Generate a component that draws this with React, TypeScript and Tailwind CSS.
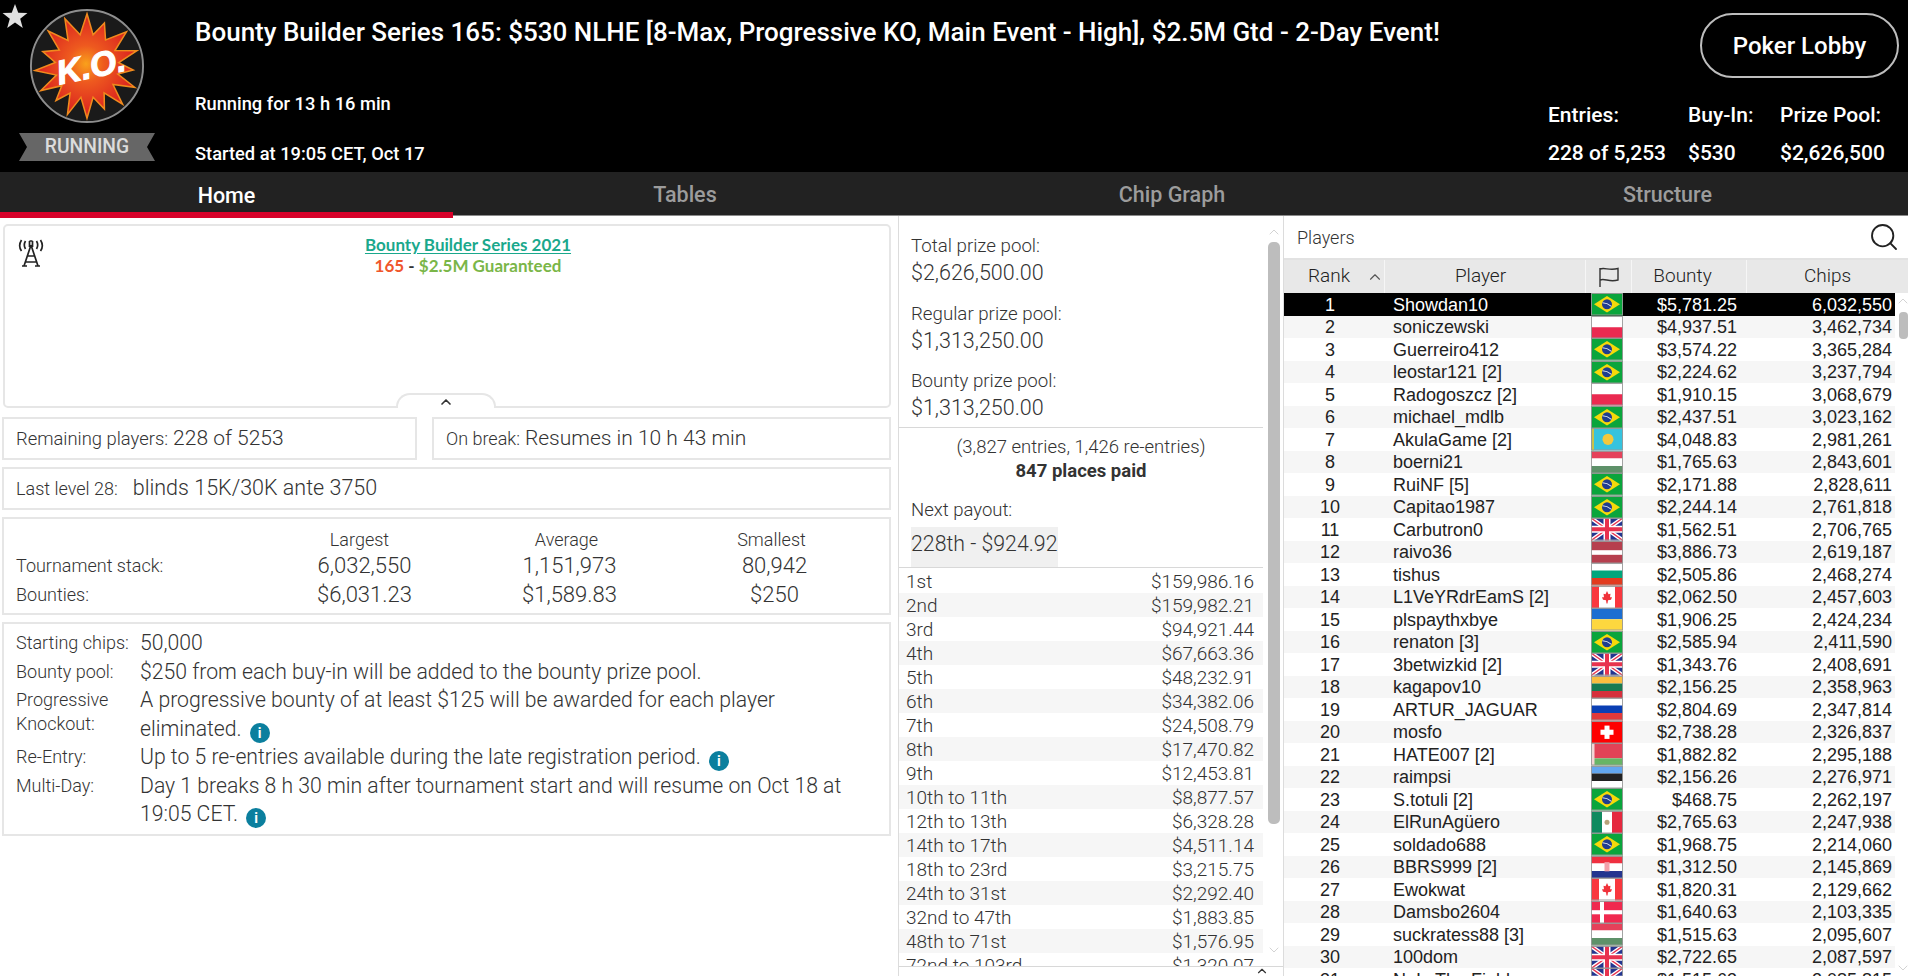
import React from 'react';
import { Search, ChevronUp, ChevronDown } from 'lucide-react';

type FlagCode = 'BR' | 'PL' | 'KZ' | 'HU' | 'GB' | 'LV' | 'BG' | 'CA' | 'UA' | 'LT' | 'RU' | 'CH' | 'BY' | 'EE' | 'MX' | 'HR' | 'DK';

const players: [string, string, FlagCode, string, string][] = [
  ['1', 'Showdan10', 'BR', '$5,781.25', '6,032,550'],
  ['2', 'soniczewski', 'PL', '$4,937.51', '3,462,734'],
  ['3', 'Guerreiro412', 'BR', '$3,574.22', '3,365,284'],
  ['4', 'leostar121 [2]', 'BR', '$2,224.62', '3,237,794'],
  ['5', 'Radogoszcz [2]', 'PL', '$1,910.15', '3,068,679'],
  ['6', 'michael_mdlb', 'BR', '$2,437.51', '3,023,162'],
  ['7', 'AkulaGame [2]', 'KZ', '$4,048.83', '2,981,261'],
  ['8', 'boerni21', 'HU', '$1,765.63', '2,843,601'],
  ['9', 'RuiNF [5]', 'BR', '$2,171.88', '2,828,611'],
  ['10', 'Capitao1987', 'BR', '$2,244.14', '2,761,818'],
  ['11', 'Carbutron0', 'GB', '$1,562.51', '2,706,765'],
  ['12', 'raivo36', 'LV', '$3,886.73', '2,619,187'],
  ['13', 'tishus', 'BG', '$2,505.86', '2,468,274'],
  ['14', 'L1VeYRdrEamS [2]', 'CA', '$2,062.50', '2,457,603'],
  ['15', 'plspaythxbye', 'UA', '$1,906.25', '2,424,234'],
  ['16', 'renaton [3]', 'BR', '$2,585.94', '2,411,590'],
  ['17', '3betwizkid [2]', 'GB', '$1,343.76', '2,408,691'],
  ['18', 'kagapov10', 'LT', '$2,156.25', '2,358,963'],
  ['19', 'ARTUR_JAGUAR', 'RU', '$2,804.69', '2,347,814'],
  ['20', 'mosfo', 'CH', '$2,738.28', '2,326,837'],
  ['21', 'HATE007 [2]', 'BY', '$1,882.82', '2,295,188'],
  ['22', 'raimpsi', 'EE', '$2,156.26', '2,276,971'],
  ['23', 'S.totuli [2]', 'BR', '$468.75', '2,262,197'],
  ['24', 'ElRunAgüero', 'MX', '$2,765.63', '2,247,938'],
  ['25', 'soldado688', 'BR', '$1,968.75', '2,214,060'],
  ['26', 'BBRS999 [2]', 'HR', '$1,312.50', '2,145,869'],
  ['27', 'Ewokwat', 'CA', '$1,820.31', '2,129,662'],
  ['28', 'Damsbo2604', 'DK', '$1,640.63', '2,103,335'],
  ['29', 'suckratess88 [3]', 'HU', '$1,515.63', '2,095,607'],
  ['30', '100dom', 'GB', '$2,722.65', '2,087,597'],
  ['31', 'NoIs.The.Field', 'GB', '$1,515.63', '2,085,815'],
];

const payouts: [string, string][] = [
  ['1st', '$159,986.16'],
  ['2nd', '$159,982.21'],
  ['3rd', '$94,921.44'],
  ['4th', '$67,663.36'],
  ['5th', '$48,232.91'],
  ['6th', '$34,382.06'],
  ['7th', '$24,508.79'],
  ['8th', '$17,470.82'],
  ['9th', '$12,453.81'],
  ['10th to 11th', '$8,877.57'],
  ['12th to 13th', '$6,328.28'],
  ['14th to 17th', '$4,511.14'],
  ['18th to 23rd', '$3,215.75'],
  ['24th to 31st', '$2,292.40'],
  ['32nd to 47th', '$1,883.85'],
  ['48th to 71st', '$1,576.95'],
  ['72nd to 103rd', '$1,320.07'],
];

const stripes = (colors: string[]) => {
  const h = 22 / colors.length;
  return colors.map((c, i) => <rect key={i} x="0" y={i * h} width="32" height={h} fill={c} />);
};

const flagArt: Record<FlagCode, React.ReactNode> = {
  BR: (
    <>
      <rect width="32" height="22" fill="#0aa53c" />
      <polygon points="16,3 29,11 16,19 3,11" fill="#f5d90a" />
      <circle cx="16" cy="11" r="5" fill="#1f3d8f" />
      <path d="M11.5 9.5 Q16 9.5 20.5 13" stroke="#dfe6f0" strokeWidth="1" fill="none" />
    </>
  ),
  PL: stripes(['#ffffff', '#ea2a50']),
  KZ: (
    <>
      <rect width="32" height="22" fill="#36c3de" />
      <rect x="1" width="2" height="22" fill="#c9c24a" />
      <circle cx="17" cy="11" r="5.5" fill="#f4c83c" />
    </>
  ),
  HU: stripes(['#e5415a', '#ffffff', '#5e9169']),
  GB: (
    <>
      <rect width="32" height="22" fill="#23358f" />
      <path d="M0 0L32 22M32 0L0 22" stroke="#ffffff" strokeWidth="4" />
      <path d="M0 0L32 22M32 0L0 22" stroke="#e8324e" strokeWidth="1.4" />
      <path d="M16 0V22M0 11H32" stroke="#ffffff" strokeWidth="7" />
      <path d="M16 0V22M0 11H32" stroke="#e8324e" strokeWidth="4" />
    </>
  ),
  LV: (
    <>
      <rect width="32" height="22" fill="#b63f4e" />
      <rect y="9" width="32" height="4.5" fill="#ffffff" />
    </>
  ),
  BG: stripes(['#ffffff', '#00a67c', '#e23b1f']),
  CA: (
    <>
      <rect width="32" height="22" fill="#ffffff" />
      <rect width="8" height="22" fill="#f9373e" />
      <rect x="24" width="8" height="22" fill="#f9373e" />
      <polygon points="16,5 17.5,8 19.5,7.5 19,11 21,11 20,13.5 17,14 16.5,17 15.5,17 15,14 12,13.5 11,11 13,11 12.5,7.5 14.5,8" fill="#f0323a" />
    </>
  ),
  UA: stripes(['#1c6ed1', '#fdd73f']),
  LT: stripes(['#fbbd3f', '#167a52', '#d6303c']),
  RU: stripes(['#ffffff', '#0a3fb4', '#e0393a']),
  CH: (
    <>
      <rect width="32" height="22" fill="#ff0000" />
      <rect x="13.5" y="4.5" width="5" height="13" fill="#ffffff" />
      <rect x="9.5" y="8.5" width="13" height="5" fill="#ffffff" />
    </>
  ),
  BY: (
    <>
      <rect width="32" height="15" fill="#e24256" />
      <rect y="15" width="32" height="7" fill="#67b565" />
      <rect width="3.5" height="22" fill="#f3d6d6" />
    </>
  ),
  EE: stripes(['#63a7ef', '#222222', '#ffffff']),
  MX: (
    <>
      <rect width="11" height="22" fill="#0f8a5f" />
      <rect x="11" width="10" height="22" fill="#ffffff" />
      <rect x="21" width="11" height="22" fill="#e5283f" />
      <circle cx="16" cy="11" r="2.5" fill="#b7a27a" />
    </>
  ),
  HR: (
    <>
      {stripes(['#ef3040', '#ffffff', '#23348f'])}
      <rect x="13.5" y="6" width="5" height="9" fill="#f3a0aa" />
    </>
  ),
  DK: (
    <>
      <rect width="32" height="22" fill="#f0294f" />
      <rect x="9" width="4" height="22" fill="#ffffff" />
      <rect y="9" width="32" height="4" fill="#ffffff" />
    </>
  ),
};

const Flag = ({ code }: { code: FlagCode }) => (
  <svg viewBox="0 0 32 22" preserveAspectRatio="none" className="w-8 h-full block">
    {flagArt[code]}
    <rect x="0.5" y="0.5" width="31" height="21" fill="none" stroke="#999999" strokeOpacity="0.9" strokeWidth="1" />
  </svg>
);

const burstAngles = [-90, -68, -41, -17, 5, 24, 47, 68, 90, 112, 132, 152, 175, 198, 222, 245];
const burstPoints = (outer: number, inner: number) =>
  burstAngles
    .flatMap((a, i) => {
      const next = i < burstAngles.length - 1 ? burstAngles[i + 1] : 270;
      const mid = (a + next) / 2;
      const rOut = outer - (i % 3 === 1 ? 6 : 0);
      return [
        [60 + rOut * Math.cos((a * Math.PI) / 180), 60 + rOut * Math.sin((a * Math.PI) / 180)],
        [60 + inner * Math.cos((mid * Math.PI) / 180), 60 + inner * Math.sin((mid * Math.PI) / 180)],
      ];
    })
    .map(p => p.map(n => n.toFixed(1)).join(','))
    .join(' ');

const KoLogo = () => (
  <svg viewBox="0 0 120 120" className="w-[116px] h-[116px] block">
    <defs>
      <radialGradient id="koFill" cx="50%" cy="48%" r="50%">
        <stop offset="0%" stopColor="#f9a11b" />
        <stop offset="35%" stopColor="#ee5a1f" />
        <stop offset="100%" stopColor="#d9201f" />
      </radialGradient>
    </defs>
    <circle cx="60" cy="60" r="58" fill="#1a1a1a" stroke="#8e8e8e" strokeWidth="2" />
    <polygon points={burstPoints(54, 33)} fill="url(#koFill)" stroke="#f08a1d" strokeWidth="1.6" strokeLinejoin="miter" />
    <text
      x="64"
      y="73"
      textAnchor="middle"
      transform="rotate(-12 60 60)"
      fill="#ffffff"
      fontFamily="Liberation Sans, sans-serif"
      fontStyle="italic"
      fontWeight="700"
      fontSize="35"
      stroke="#ffffff"
      strokeWidth="1.2"
    >
      K.O.
    </text>
  </svg>
);

const Ribbon = () => (
  <div className="relative w-[136px] h-[28px] flex items-center justify-center">
    <svg viewBox="0 0 136 28" className="absolute inset-0 w-full h-full">
      <polygon points="0,0 136,0 128,14 136,28 0,28 8,14" fill="#666666" />
    </svg>
    <span className="relative text-[19.3px] text-[#dcdcdc] leading-none">RUNNING</span>
  </div>
);

const InfoDot = () => (
  <span className="inline-flex items-center justify-center w-[20px] h-[20px] my-[-4px] rounded-full bg-[#0b7f9e] text-white text-[14px] font-bold leading-none ml-[8px] align-[-2px]">
    i
  </span>
);

const ScrollArrow = ({ down }: { down?: boolean }) =>
  down ? (
    <ChevronDown size={16} strokeWidth={1} className="text-[#bcbcbc]" />
  ) : (
    <ChevronUp size={16} strokeWidth={1} className="text-[#bcbcbc]" />
  );

const Header = () => (
  <header className="h-[172px] bg-black text-white flex shrink-0 font-medium">
    <div className="relative w-[195px] shrink-0 flex flex-col items-center pt-[8px]">
      <svg viewBox="0 0 24 24" className="absolute left-[2px] top-[3px] w-[26px] h-[26px]">
        <polygon points="12,1 15,9 23.5,9.3 16.8,14.5 19.2,23 12,18 4.8,23 7.2,14.5 0.5,9.3 9,9" fill="#e0e0e0" />
      </svg>
      <div className="pr-[21px]">
        <KoLogo />
      </div>
      <div className="mt-[9px] pr-[21px]">
        <Ribbon />
      </div>
    </div>
    <div className="flex-1 flex flex-col">
      <div className="h-[64px] flex items-center text-[26px] whitespace-nowrap">
        Bounty Builder Series 165: $530 NLHE [8-Max, Progressive KO, Main Event - High], $2.5M Gtd - 2-Day Event!
      </div>
      <div className="mt-[27px] text-[18.3px] leading-[26px]">Running for 13 h 16 min</div>
      <div className="mt-[24px] text-[18.3px] leading-[26px]">Started at 19:05 CET, Oct 17</div>
    </div>
    <div className="w-[360px] shrink-0 flex flex-col">
      <div className="flex justify-end pr-[9px] pt-[13px]">
        <div className="w-[199px] h-[65px] rounded-full border-2 border-[#bdbdbd] flex items-center justify-center text-[24px]">
          Poker Lobby
        </div>
      </div>
      <div className="grid grid-cols-[140px_92px_1fr] mt-[24px] text-[21px] leading-[26px] gap-y-[12px]">
        <div>Entries:</div>
        <div>Buy-In:</div>
        <div>Prize Pool:</div>
        <div>228 of 5,253</div>
        <div>$530</div>
        <div>$2,626,500</div>
      </div>
    </div>
  </header>
);

const Tabs = () => (
  <nav className="h-[44px] bg-[#222222] grid grid-cols-[453px_464px_510px_481px] shrink-0 text-[21.5px] font-medium border-b border-[#8a8a8a]">
    <div className="border-b-[6px] border-[#d8022a] text-white flex items-center justify-center pt-[8px]">Home</div>
    <div className="text-[#9c9c9c] flex items-center justify-center">Tables</div>
    <div className="text-[#9c9c9c] flex items-center justify-center">Chip Graph</div>
    <div className="text-[#9c9c9c] flex items-center justify-center">Structure</div>
  </nav>
);

const LeftColumn = () => (
  <section className="w-[898px] shrink-0 pl-[2px] pr-[7px] pt-[8px] flex flex-col text-[#333333] font-light">
    <div className="relative h-[184px] ml-[1px] border-2 border-[#e6e6e6] rounded-[5px]">
      <svg viewBox="0 0 28 28" className="absolute left-[12px] top-[13px] w-[28px] h-[28px] fill-none stroke-[#222222] stroke-[1.7]">
        <path d="M14 6L7 27M14 6L21 27M10.5 17H17.5M8.5 23H19.5M5 27H10M18 27H23" />
        <path d="M12.5 2V8M15.5 2V8M12.5 2H15.5" />
        <path d="M8.5 2C7 4.5 7 7.5 8.5 10M19.5 2C21 4.5 21 7.5 19.5 10M4.5 1C2 5 2 8.5 4.5 12M23.5 1C26 5 26 8.5 23.5 12" />
      </svg>
      <div className="pt-[8px] pl-[42px] text-center font-['Lato',sans-serif] font-bold text-[17px] leading-[21px]">
        <div>
          <span className="text-[#1aa88c] underline underline-offset-2">Bounty Builder Series 2021</span>
        </div>
        <div>
          <span className="text-[#f0562b]">165</span>
          <span className="text-[#333333]"> - </span>
          <span className="text-[#7ab648]">$2.5M Guaranteed</span>
        </div>
      </div>
      <div className="absolute left-[391px] bottom-[-2px] w-[100px] h-[15px] bg-white border-t-2 border-x-2 border-[#e6e6e6] rounded-t-[14px] flex items-center justify-center">
        <ChevronUp size={16} strokeWidth={2.5} className="text-[#333333]" />
      </div>
    </div>
    <div className="flex gap-[15px] mt-[9px] h-[43px]">
      <div className="w-[415px] border-2 border-[#e6e6e6] flex items-center pl-[12px] text-[18.4px]">
        Remaining players:<span className="text-[21px] ml-[5px]">228 of 5253</span>
      </div>
      <div className="flex-1 border-2 border-[#e6e6e6] flex items-center pl-[12px] text-[18px]">
        On break:<span className="text-[21px] ml-[5px]">Resumes in 10 h 43 min</span>
      </div>
    </div>
    <div className="mt-[7px] h-[43px] border-2 border-[#e6e6e6] flex items-center pl-[12px] text-[18px]">
      Last level 28:<span className="text-[21.5px] ml-[15px]">blinds 15K/30K ante 3750</span>
    </div>
    <div className="mt-[7px] h-[98px] border-2 border-[#e6e6e6] pt-[7px] pl-[12px] grid grid-cols-[246px_205px_205px_205px] grid-rows-[27px_25px_33px] items-center text-center text-[22px] leading-none">
      <div />
      <div className="text-[18px] pr-[10px]">Largest</div>
      <div className="text-[18px] pr-[6px]">Average</div>
      <div className="text-[18px] pr-[6px]">Smallest</div>
      <div className="text-left text-[18px]">Tournament stack:</div>
      <div>6,032,550</div>
      <div>1,151,973</div>
      <div>80,942</div>
      <div className="text-left text-[18px]">Bounties:</div>
      <div>$6,031.23</div>
      <div>$1,589.83</div>
      <div>$250</div>
    </div>
    <div className="mt-[7px] h-[214px] border-2 border-[#e6e6e6] pt-[5px] pl-[12px] pr-[40px] grid grid-cols-[124px_1fr] auto-rows-auto content-start text-[21.2px] leading-[28.5px]">
      <div className="text-[18px]">Starting chips:</div>
      <div>50,000</div>
      <div className="text-[18px]">Bounty pool:</div>
      <div>$250 from each buy-in will be added to the bounty prize pool.</div>
      <div className="text-[18px] leading-[24px] pt-[2px]">Progressive Knockout:</div>
      <div>
        A progressive bounty of at least $125 will be awarded for each player eliminated.
        <InfoDot />
      </div>
      <div className="text-[18px]">Re-Entry:</div>
      <div>
        Up to 5 re-entries available during the late registration period.
        <InfoDot />
      </div>
      <div className="text-[18px]">Multi-Day:</div>
      <div>
        Day 1 breaks 8 h 30 min after tournament start and will resume on Oct 18 at 19:05 CET.
        <InfoDot />
      </div>
    </div>
  </section>
);

const PrizeColumn = () => (
  <section className="w-[386px] shrink-0 border-x border-[#dcdcdc] flex flex-col text-[#333333] font-light">
    <div className="h-[750px] flex overflow-hidden">
      <div className="w-[364px] shrink-0 flex flex-col">
        <div className="h-[212px] border-b border-[#d8d8d8] pl-[12px] pt-[17px] text-[18.7px] leading-[27px] shrink-0">
          <div>Total prize pool:</div>
          <div className="text-[21.5px] -mt-[1px]">$2,626,500.00</div>
          <div className="mt-[15px]">Regular prize pool:</div>
          <div className="text-[21.5px] -mt-[1px]">$1,313,250.00</div>
          <div className="mt-[14px]">Bounty prize pool:</div>
          <div className="text-[21.5px] -mt-[1px]">$1,313,250.00</div>
        </div>
        <div className="h-[140px] border-b border-[#d8d8d8] shrink-0 flex flex-col">
          <div className="text-center text-[18.5px] leading-[24px] pt-[7px]">(3,827 entries, 1,426 re-entries)</div>
          <div className="text-center text-[18.5px] leading-[24px] font-bold">847 places paid</div>
          <div className="pl-[12px] text-[18.5px] leading-[26px] mt-[14px]">Next payout:</div>
          <div className="ml-[12px] mt-[4px] w-[147px] h-[41px] bg-[#f0f0f0] flex items-center pb-[6px] text-[21.3px] whitespace-nowrap">228th - $924.92</div>
        </div>
        <div className="mt-[1px] text-[19px] font-light">
          {payouts.map(([place, amount], i) => (
            <div key={place} className={`h-[24px] flex items-center justify-between pl-[7px] pr-[9px] pt-[3px] ${i % 2 === 1 ? 'bg-[#f6f6f6]' : 'bg-white'}`}>
              <span>{place}</span>
              <span>{amount}</span>
            </div>
          ))}
        </div>
      </div>
      <div className="w-[21px] shrink-0 flex flex-col items-center pt-[8px] pb-[8px] relative">
        <ScrollArrow />
        <div className="w-[12px] h-[582px] mt-[2px] rounded-[5px] bg-[#bdbdbd]" />
        <div className="flex-1" />
        <ScrollArrow down />
      </div>
    </div>
    <div className="h-[10px] border-t border-[#d8d8d8] flex justify-end pr-[14px] relative">
      <ChevronUp size={14} strokeWidth={2} className="text-[#333333] -mt-[3px]" />
    </div>
  </section>
);

const PlayersColumn = () => (
  <section className="flex-1 min-w-0 flex flex-col text-[#222222]">
    <div className="h-[44px] flex items-center justify-between pl-[13px] pr-[8px] border-b-2 border-[#e2e2e2] shrink-0">
      <span className="text-[18px] font-light text-[#333333]">Players</span>
      <Search size={32} strokeWidth={1.4} className="text-[#222222]" />
    </div>
    <div className="h-[33px] bg-[#e8e8e8] grid grid-cols-[101px_200px_45px_114px_1fr] gap-x-[1px] shrink-0 text-[19px] font-light">
      <div className="bg-[#e8e8e8] flex items-center pl-[24px] gap-[16px] border-r border-[#f6f6f6]">
        Rank
        <ChevronUp size={18} strokeWidth={1.5} className="text-[#555555]" />
      </div>
      <div className="flex items-center justify-center pr-[10px] border-r border-[#f6f6f6]">Player</div>
      <div className="flex items-center justify-center border-r border-[#f6f6f6]">
        <svg viewBox="0 0 24 24" className="w-[24px] h-[24px] fill-none stroke-[#333333] stroke-[1.4]">
          <path d="M3 3V22M3 4C8 2 12 6 21 3.5V15C12 17.5 8 13 3 15" />
        </svg>
      </div>
      <div className="flex items-center justify-center pr-[14px] border-r border-[#f6f6f6]">Bounty</div>
      <div className="flex items-center justify-center pr-[1px]">Chips</div>
    </div>
    <div className="flex-1 flex overflow-hidden">
      <div className="w-[611px] shrink-0 font-['Liberation_Sans',sans-serif] text-[18px]">
        {players.map(([rank, name, flag, bounty, chips], i) => (
          <div
            key={rank}
            className={`h-[22.5px] grid grid-cols-[92px_215px_32px_114px_1fr] items-center leading-none ${
              i === 0 ? 'bg-black text-white' : i % 2 === 1 ? 'bg-[#f6f6f6]' : 'bg-white'
            }`}
          >
            <span className="text-center pt-[1px]">{rank}</span>
            <span className="pl-[17px] pt-[1px] whitespace-nowrap">{name}</span>
            <span className="h-[22.5px] block">
              <Flag code={flag} />
            </span>
            <span className="text-right pt-[1px]">{bounty}</span>
            <span className="text-right pr-[3px] pt-[1px]">{chips}</span>
          </div>
        ))}
      </div>
      <div className="flex-1 flex flex-col items-center">
        <ScrollArrow />
        <div className="w-[9px] h-[27px] mt-[3px] rounded-[4px] bg-[#bdbdbd]" />
        <div className="flex-1" />
        <ScrollArrow down />
      </div>
    </div>
  </section>
);

export default function App() {
  return (
    <div className="w-[1908px] h-[976px] overflow-hidden bg-white flex flex-col font-['Roboto',sans-serif]">
      <Header />
      <Tabs />
      <main className="flex-1 min-h-0 flex">
        <LeftColumn />
        <PrizeColumn />
        <PlayersColumn />
      </main>
    </div>
  );
}
